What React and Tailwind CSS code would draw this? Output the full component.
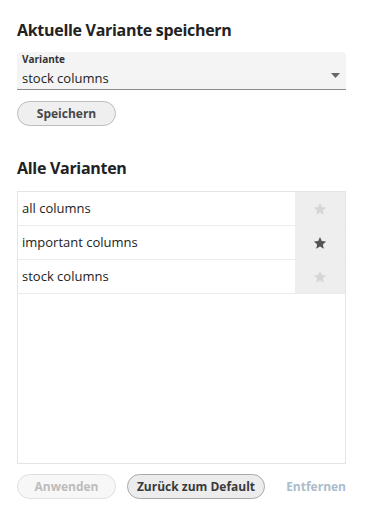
import React from 'react';

const VARIANTS = [
  { name: 'all columns', fav: false },
  { name: 'important columns', fav: true },
  { name: 'stock columns', fav: false },
];

function Star({ active }) {
  return (
    <svg width="14" height="14" viewBox="0 0 24 24" className={active ? 'fill-[#555555]' : 'fill-[#d6d6d6]'}>
      <path d="M12 1.8l3.1 6.9 7.4.7-5.6 5 1.7 7.4L12 17.9l-6.6 3.9 1.7-7.4-5.6-5 7.4-.7z" strokeLinejoin="round" />
    </svg>
  );
}

export default function App() {
  return (
    <div className="w-[365px] h-[515px] bg-white px-[17px] pt-[18px] text-[#222] font-['Open_Sans',sans-serif]">
      <h2 className="text-[16px] font-bold leading-[24px] tracking-[-0.3px]">Aktuelle Variante speichern</h2>

      <div className="mt-[10px] h-[38px] w-[329px] rounded-t-[4px] bg-[#f4f4f4] border-b border-[#8c8c8c] px-[5px] flex items-end justify-between">
        <div className="flex flex-col pb-[1px]">
          <span className="text-[10px] font-bold leading-[12px] text-[#333]">Variante</span>
          <span className="mt-[4px] text-[13px] leading-[19px] text-[#222]">stock columns</span>
        </div>
        <svg width="9" height="5" viewBox="0 0 9 5" className="mb-[11px] mr-[1px] fill-[#666]">
          <path d="M0 0h9L4.5 5z" />
        </svg>
      </div>

      <button className="mt-[11px] h-[25px] w-[99px] rounded-full border border-[#bdbdbd] bg-[#efefef] text-[12px] font-bold text-[#484848] leading-none">
        Speichern
      </button>

      <h2 className="mt-[30px] text-[16px] font-bold leading-[24px] tracking-[-0.3px]">Alle Varianten</h2>

      <div className="mt-[11px] h-[273px] w-[329px] border border-[#e4e4e4]">
        {VARIANTS.map(v => (
          <div key={v.name} className="h-[34px] flex border-b border-[#ececec]">
            <div className="flex-1 flex items-center pl-[4px] text-[13px] text-[#222]">{v.name}</div>
            <div className="w-[50px] bg-[#eeeeee] flex items-center justify-center">
              <Star active={v.fav} />
            </div>
          </div>
        ))}
      </div>

      <div className="mt-[10px] flex items-center">
        <button className="h-[25px] w-[99px] rounded-full border border-[#e0e0e0] bg-[#f7f7f7] text-[12px] font-bold text-[#bcbcbc] leading-none">
          Anwenden
        </button>
        <button className="ml-[11px] h-[25px] w-[138px] rounded-full border border-[#a8a8a8] bg-[#ececec] text-[12px] font-bold text-[#3a3a3a] leading-none">
          Zurück zum Default
        </button>
        <button className="ml-auto mr-[2px] text-[12px] font-bold text-[#abbccb] leading-none">
          Entfernen
        </button>
      </div>
    </div>
  );
}
